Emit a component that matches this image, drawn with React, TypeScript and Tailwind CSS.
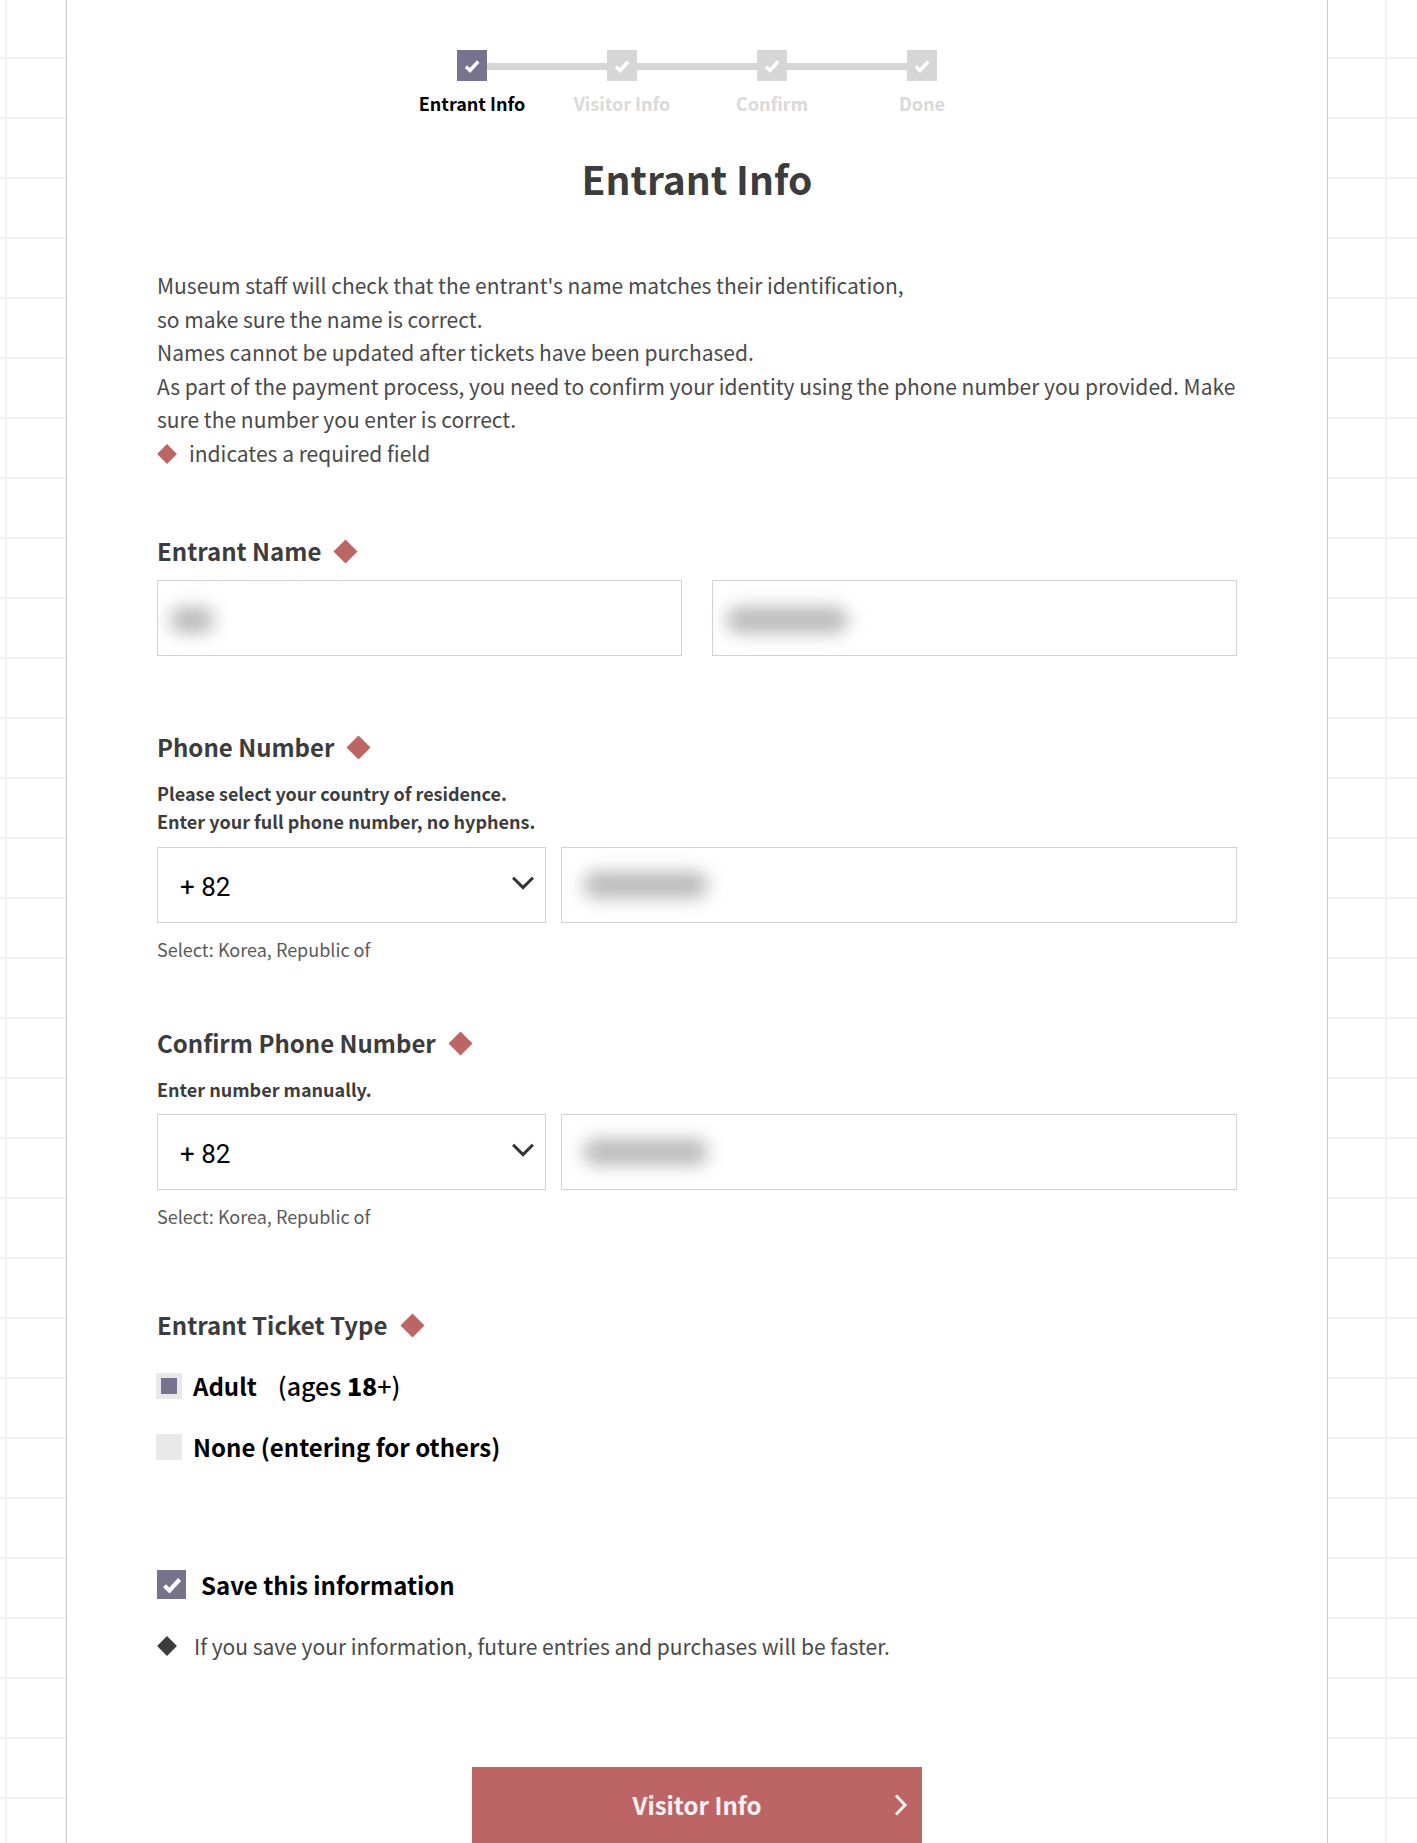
const STEPS = ["Entrant Info", "Visitor Info", "Confirm", "Done"];

function Check({ className }: { className?: string }) {
  return (
    <svg viewBox="0 0 16 16" className={className} fill="none">
      <path d="M2.5 8.5 L6.2 12 L13.5 4" stroke="currentColor" strokeWidth="3" />
    </svg>
  );
}

function Diamond({ className }: { className: string }) {
  return <span className={`inline-block rotate-45 ${className}`} />;
}

function Label({ text, className }: { text: string; className: string }) {
  return (
    <div className={`flex h-9 translate-y-px items-center gap-4 text-[24px] leading-9 font-bold text-[#3c3c3c] ${className}`}>
      <span className="-translate-y-px">{text}</span>
      <Diamond className="h-[17px] w-[17px] bg-[#bd6464]" />
    </div>
  );
}

function Blurred({ className }: { className: string }) {
  return <div className={`rounded-full bg-[#b8b8b8] blur-[9px] ${className}`} />;
}

function PhoneRow({ className }: { className: string }) {
  return (
    <>
      <div className={`flex gap-[15px] ${className}`}>
        <div className="flex h-[76px] w-[389px] items-center justify-between border border-[#d2d2d2] pr-2 pl-[22px]">
          <span className="translate-y-[3px] text-[26px] text-black [font-family:Roboto,sans-serif]">+ 82</span>
          <svg viewBox="0 0 24 24" className="h-7 w-7 -translate-y-0.5 text-[#333333]" fill="none">
            <path d="M3.5 7.5 L12 16 L20.5 7.5" stroke="currentColor" strokeWidth="2.6" />
          </svg>
        </div>
        <div className="flex h-[76px] flex-1 items-center border border-[#d2d2d2] pl-[21px]">
          <Blurred className="h-[26px] w-[125px]" />
        </div>
      </div>
      <p className="mt-[13px] text-[18px] leading-[26px] text-[#5a5a5a]">Select: Korea, Republic of</p>
    </>
  );
}

export default function App() {
  return (
    <div className="h-[1843px] overflow-hidden bg-white bg-[linear-gradient(#f2f2f2_2px,transparent_2px),linear-gradient(90deg,#f2f2f2_2px,transparent_2px)] bg-[size:60px_60px] bg-[position:5px_57px] [font-family:'Noto_Sans_CJK_KR','Noto_Sans',sans-serif]">
      <div className="ml-[66px] h-full w-[1262px] border-x border-[#cccccc] bg-white pt-[50px]">
        <div className="mx-auto w-[1080px]">
          {/* Stepper */}
          <div className="relative mx-auto flex w-[600px]">
            <div className="absolute top-[13px] right-[75px] left-[75px] h-[7px] bg-[#d6d6d6]" />
            {STEPS.map((step, i) => (
              <div key={step} className="relative flex w-[150px] flex-col items-center">
                <div className={`flex h-[31px] w-[30px] items-center justify-center text-white ${i === 0 ? "bg-[#77738c]" : "bg-[#d6d6d6]"}`}>
                  <Check className="h-[18px] w-[18px]" />
                </div>
                <span className={`mt-[10px] text-[18px] leading-6 font-bold ${i === 0 ? "text-black" : "text-[#d9d9d9]"}`}>
                  {step}
                </span>
              </div>
            ))}
          </div>

          <h1 className="mt-[38px] text-center text-[39px] leading-[50px] font-bold text-[#3c3c3c]">Entrant Info</h1>

          <div className="mt-[66px] text-[21px] leading-[33.6px] text-[#4a4a4a]">
            <p>Museum staff will check that the entrant's name matches their identification,</p>
            <p>so make sure the name is correct.</p>
            <p>Names cannot be updated after tickets have been purchased.</p>
            <p>As part of the payment process, you need to confirm your identity using the phone number you provided. Make sure the number you enter is correct.</p>
            <p className="flex items-center gap-[15px]">
              <Diamond className="ml-[3px] h-[14px] w-[14px] bg-[#bd6464]" />
              indicates a required field
            </p>
          </div>

          <Label text="Entrant Name" className="mt-[62px]" />
          <div className="mt-[11px] flex gap-[30px]">
            <div className="flex h-[76px] flex-1 items-center border border-[#d2d2d2] pl-3">
              <Blurred className="h-[26px] w-[44px] translate-y-[2px]" />
            </div>
            <div className="flex h-[76px] flex-1 items-center border border-[#d2d2d2] pl-[13px]">
              <Blurred className="h-[26px] w-[122px] translate-y-[2px]" />
            </div>
          </div>

          <Label text="Phone Number" className="mt-[73px]" />
          <p className="mt-[14px] text-[18px] leading-7 font-bold text-[#3c3c3c]">
            Please select your country of residence.
            <br />
            Enter your full phone number, no hyphens.
          </p>
          <PhoneRow className="mt-3" />

          <Label text="Confirm Phone Number" className="mt-[63px]" />
          <p className="mt-[14px] text-[18px] leading-7 font-bold text-[#3c3c3c]">Enter number manually.</p>
          <PhoneRow className="mt-[11px]" />

          <Label text="Entrant Ticket Type" className="mt-[78px]" />
          <div className="mt-[26px] -ml-px flex h-[34px] items-center gap-[11px] text-[24px] font-bold text-black">
            <span className="flex h-[26px] w-[26px] items-center justify-center bg-[#e9e9e9]">
              <span className="h-4 w-4 bg-[#77738c]" />
            </span>
            <span className="flex items-baseline gap-[21px]">
              Adult
              <span className="text-[25px] font-medium">
                (ages <span className="font-black">18</span>+)
              </span>
            </span>
          </div>
          <div className="mt-[27px] -ml-px flex h-[34px] items-center gap-[11px] text-[24px] font-bold text-black">
            <span className="h-[26px] w-[26px] bg-[#e9e9e9]" />
            None (entering for others)
          </div>

          <div className="mt-[104px] flex h-[34px] items-center gap-[15px] text-[24px] font-bold text-black">
            <span className="flex h-[29px] w-[29px] items-center justify-center bg-[#77738c] text-white">
              <Check className="h-[22px] w-[22px]" />
            </span>
            Save this information
          </div>
          <div className="mt-[29px] flex items-center gap-5 text-[21px] leading-[30px] text-[#4a4a4a]">
            <Diamond className="ml-[3px] h-[14px] w-[14px] bg-[#3c3c3c]" />
            If you save your information, future entries and purchases will be faster.
          </div>

          <button className="relative mx-auto mt-[106px] flex h-[76px] w-[450px] items-center justify-center bg-[#bd6464] text-[24px] font-bold text-[#fdf3f3]">
            Visitor Info
            <svg viewBox="0 0 16 24" className="absolute right-[13px] h-6 w-4" fill="none">
              <path d="M3 2.5 L12 12 L3 21.5" stroke="currentColor" strokeWidth="3" />
            </svg>
          </button>
        </div>
      </div>
    </div>
  );
}
